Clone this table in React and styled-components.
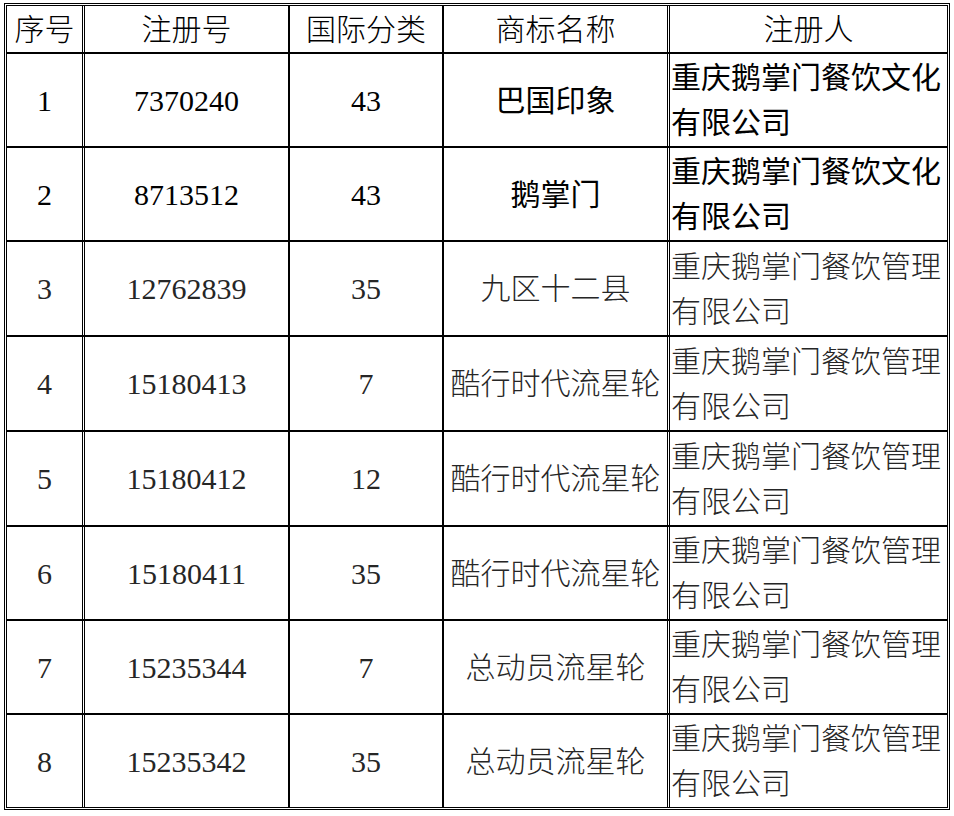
import React from 'react';
import styled, { createGlobalStyle, css } from 'styled-components';

const GlobalStyle = createGlobalStyle`
  html, body {
    margin: 0;
    padding: 0;
    background: #ffffff;
  }
  body {
    font-family: "Liberation Serif", "Noto Sans CJK SC", serif;
    color: #000;
  }
`;

const Frame = styled.div`
  display: inline-block;
  margin: 3px 0 0 4px;
  border: 1px solid #000;
  padding: 1px;
  background: #fff;
`;

const Grid = styled.div`
  display: grid;
  grid-template-columns: 76px 207px 154px 224px 281px;
  grid-template-rows: 48px 94px 94px 95px 95px 95px 94px 94px 94px;
`;

const tones = {
  head: css`
    color: #000;
    font-weight: 300;
  `,
  strong: css`
    color: #000;
    font-weight: 400;
  `,
  light: css`
    color: #262626;
    font-weight: 300;
  `,
};

const Cell = styled.div`
  box-sizing: border-box;
  border: 1px solid #000;
  display: flex;
  align-items: center;
  justify-content: center;
  font-size: 30px;
  line-height: 45px;
  white-space: nowrap;
  overflow: hidden;
  font-family: "Liberation Serif", "Noto Sans CJK SC", serif;
  ${(p) => tones[p.$tone || 'light']}

  ${(p) =>
    (p.$col === 1 || p.$col === 4) &&
    css`
      border-right: 0;
    `}

  ${(p) =>
    (p.$col === 2 || p.$col === 5) &&
    css`
      border-left: 3px double #000;
    `}

  ${(p) =>
    p.$wrap &&
    css`
      justify-content: flex-start;
      white-space: normal;
      padding: 0 1px 0 1px;
      word-break: break-all;
    `}
`;

const headers = ['序号', '注册号', '国际分类', '商标名称', '注册人'];

const rows = [
  { no: '1', reg: '7370240', cls: '43', name: '巴国印象', owner: '重庆鹅掌门餐饮文化有限公司', strong: true },
  { no: '2', reg: '8713512', cls: '43', name: '鹅掌门', owner: '重庆鹅掌门餐饮文化有限公司', strong: true },
  { no: '3', reg: '12762839', cls: '35', name: '九区十二县', owner: '重庆鹅掌门餐饮管理有限公司' },
  { no: '4', reg: '15180413', cls: '7', name: '酷行时代流星轮', owner: '重庆鹅掌门餐饮管理有限公司' },
  { no: '5', reg: '15180412', cls: '12', name: '酷行时代流星轮', owner: '重庆鹅掌门餐饮管理有限公司' },
  { no: '6', reg: '15180411', cls: '35', name: '酷行时代流星轮', owner: '重庆鹅掌门餐饮管理有限公司' },
  { no: '7', reg: '15235344', cls: '7', name: '总动员流星轮', owner: '重庆鹅掌门餐饮管理有限公司' },
  { no: '8', reg: '15235342', cls: '35', name: '总动员流星轮', owner: '重庆鹅掌门餐饮管理有限公司' },
];

export default function App() {
  return (
    <>
      <GlobalStyle />
      <Frame>
        <Grid>
          {headers.map((h, i) => (
            <Cell key={h} $col={i + 1} $tone="head">
              {h}
            </Cell>
          ))}
          {rows.map((r) => {
            const tone = r.strong ? 'strong' : 'light';
            return (
              <React.Fragment key={r.no}>
                <Cell $col={1} $tone={tone}>{r.no}</Cell>
                <Cell $col={2} $tone={tone}>{r.reg}</Cell>
                <Cell $col={3} $tone={tone}>{r.cls}</Cell>
                <Cell $col={4} $tone={tone}>{r.name}</Cell>
                <Cell $col={5} $tone={tone} $wrap>{r.owner}</Cell>
              </React.Fragment>
            );
          })}
        </Grid>
      </Frame>
    </>
  );
}
